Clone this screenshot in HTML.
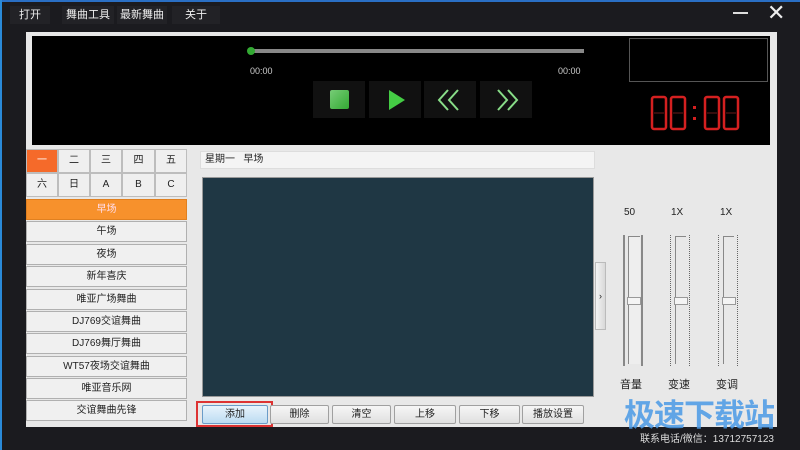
<!DOCTYPE html><html><head><meta charset="utf-8"><style>
*{margin:0;padding:0;box-sizing:border-box}
body{width:800px;height:450px;overflow:hidden;background:#1b1b1f;position:relative;font-family:"Liberation Sans","Noto Sans CJK SC",sans-serif;font-size:11px;color:#222}
.a{position:absolute}
.menu{color:#eee;font-size:11px;top:6px;height:18px;line-height:18px;text-align:center;background:#222226}
.btn{position:absolute;background:linear-gradient(#f6f6f6,#e0e0e0);border:1px solid #a0a0a0;text-align:center;font-size:10px;line-height:17px;border-radius:2px}
.g{position:absolute;background:#efefef;border:1px solid #bdbdbd;text-align:center;line-height:22px;font-size:10px}
.li{position:absolute;left:26px;width:161px;height:21px;background:#f0f0f0;border:1px solid #b0b0b0;text-align:center;line-height:19px;font-size:10px}
.pb{position:absolute;top:81px;height:37px;width:52px;background:#111;}
.trk{position:absolute;top:235px;width:20px;height:131px}
</style></head><body>
<div class="a" style="left:0;top:0;width:800px;height:2px;background:#2a6fc4"></div>
<div class="a" style="left:0;top:0;width:2px;height:450px;background:#2a8ad8"></div>
<div class="a menu" style="left:10px;width:40px">打开</div>
<div class="a menu" style="left:62px;width:52px">舞曲工具</div>
<div class="a menu" style="left:117px;width:50px">最新舞曲</div>
<div class="a menu" style="left:172px;width:48px">关于</div>
<div class="a" style="left:733px;top:12px;width:15px;height:2px;background:#ddd"></div>
<div class="a" style="left:767px;top:0px;color:#eee;font-size:22px;line-height:26px">✕</div>
<div class="a" style="left:26px;top:32px;width:751px;height:395px;background:#e8e8e8"></div>
<div class="a" style="left:32px;top:36px;width:738px;height:109px;background:#000"></div>
<div class="a" style="left:250px;top:49px;width:334px;height:4px;background:#888"></div>
<div class="a" style="left:247px;top:47px;width:8px;height:8px;border-radius:50%;background:#3a3"></div>
<div class="a" style="left:250px;top:66px;color:#ccc;font-size:9px">00:00</div>
<div class="a" style="left:558px;top:66px;color:#ccc;font-size:9px">00:00</div>
<div class="pb" style="left:313px"><div class="a" style="left:17px;top:9px;width:19px;height:19px;border-radius:2px;background:linear-gradient(135deg,#7c7,#3a3)"></div></div>
<div class="pb" style="left:369px"><svg class="a" style="left:19px;top:8px" width="18" height="22"><path d="M1 1 L17 11 L1 21Z" fill="#4c4"/></svg></div>
<div class="pb" style="left:424px"><svg class="a" style="left:12px;top:8px" width="26" height="22"><path d="M12 1 L3 11 L12 21 M22 1 L13 11 L22 21" stroke="#8d8" stroke-width="2" fill="none"/></svg></div>
<div class="pb" style="left:480px"><svg class="a" style="left:14px;top:8px" width="26" height="22"><path d="M4 1 L13 11 L4 21 M14 1 L23 11 L14 21" stroke="#8d8" stroke-width="2" fill="none"/></svg></div>
<div class="a" style="left:629px;top:38px;width:139px;height:44px;border:1px solid #555"></div>
<svg class="a" style="left:648px;top:94px" width="94" height="40"><g stroke="#d42020" stroke-width="2.5" fill="none">
<rect x="4" y="3" width="14" height="32" rx="2"/><rect x="23" y="3" width="14" height="32" rx="2"/>
<rect x="57" y="3" width="14" height="32" rx="2"/><rect x="76" y="3" width="14" height="32" rx="2"/></g>
<g stroke="#551" stroke-width="1"><path d="M6 19h10M25 19h10M59 19h10M78 19h10" stroke="#6a1a1a"/></g>
<rect x="45" y="12" width="3" height="3" fill="#d42020"/><rect x="45" y="23" width="3" height="3" fill="#d42020"/></svg>
<div class="g" style="left:26px;top:149px;width:32px;height:24px;background:#f56a2a;color:#fff">一</div>
<div class="g" style="left:58px;top:149px;width:32px;height:24px">二</div>
<div class="g" style="left:90px;top:149px;width:32px;height:24px">三</div>
<div class="g" style="left:122px;top:149px;width:33px;height:24px">四</div>
<div class="g" style="left:155px;top:149px;width:32px;height:24px">五</div>
<div class="g" style="left:26px;top:173px;width:32px;height:24px">六</div>
<div class="g" style="left:58px;top:173px;width:32px;height:24px">日</div>
<div class="g" style="left:90px;top:173px;width:32px;height:24px">A</div>
<div class="g" style="left:122px;top:173px;width:33px;height:24px">B</div>
<div class="g" style="left:155px;top:173px;width:32px;height:24px">C</div>
<div class="li" style="top:199px;background:#f7912c;color:#fde;border-color:#e08020">早场</div>
<div class="li" style="top:221px">午场</div>
<div class="li" style="top:244px">夜场</div>
<div class="li" style="top:266px">新年喜庆</div>
<div class="li" style="top:289px">唯亚广场舞曲</div>
<div class="li" style="top:311px">DJ769交谊舞曲</div>
<div class="li" style="top:333px">DJ769舞厅舞曲</div>
<div class="li" style="top:356px">WT57夜场交谊舞曲</div>
<div class="li" style="top:378px">唯亚音乐网</div>
<div class="li" style="top:400px">交谊舞曲先锋</div>
<div class="a" style="left:200px;top:151px;width:395px;height:18px;background:#f4f4f4;border:1px solid #ddd;padding-left:4px;line-height:16px;font-size:10px">星期一 &nbsp; 早场</div>
<div class="a" style="left:202px;top:177px;width:392px;height:220px;background:#1f3744;border:1px solid #999"></div>
<div class="a" style="left:196px;top:401px;width:77px;height:26px;border:2px solid #d33"></div>
<div class="btn" style="left:202px;top:405px;width:66px;height:19px;background:linear-gradient(#e8f3fc,#bcdcf2);border-color:#6a9cc8">添加</div>
<div class="btn" style="left:270px;top:405px;width:59px;height:19px">删除</div>
<div class="btn" style="left:332px;top:405px;width:59px;height:19px">清空</div>
<div class="btn" style="left:394px;top:405px;width:62px;height:19px">上移</div>
<div class="btn" style="left:459px;top:405px;width:61px;height:19px">下移</div>
<div class="btn" style="left:522px;top:405px;width:62px;height:19px">播放设置</div>
<div class="a" style="left:595px;top:262px;width:11px;height:68px;background:linear-gradient(90deg,#f4f4f4,#d8d8d8);border:1px solid #bbb;font-size:9px;line-height:66px;text-align:center">›</div>
<div class="a" style="left:624px;top:207px;font-size:10px">50</div>
<div class="a" style="left:671px;top:207px;font-size:10px">1X</div>
<div class="a" style="left:720px;top:207px;font-size:10px">1X</div>
<div class="trk" style="left:623px;border-left:2px solid #888;border-right:2px solid #888"><div class="a" style="left:3px;top:1px;width:12px;height:128px;border:1px solid #888;border-right:none;border-bottom:none;background:#eee"></div><div class="a" style="left:2px;top:62px;width:14px;height:8px;background:#f4f4f4;border:1px solid #999"></div></div>
<div class="trk" style="left:670px;border-left:1px dotted #666;border-right:1px dotted #666"><div class="a" style="left:4px;top:1px;width:11px;height:128px;border:1px solid #888;border-right:none;border-bottom:none"></div><div class="a" style="left:3px;top:62px;width:14px;height:8px;background:#f4f4f4;border:1px solid #999"></div></div>
<div class="trk" style="left:718px;border-left:1px dotted #666;border-right:1px dotted #666"><div class="a" style="left:4px;top:1px;width:11px;height:128px;border:1px solid #888;border-right:none;border-bottom:none"></div><div class="a" style="left:3px;top:62px;width:14px;height:8px;background:#f4f4f4;border:1px solid #999"></div></div>
<div class="a" style="left:620px;top:376px;font-size:11px">音量</div>
<div class="a" style="left:668px;top:376px;font-size:11px">变速</div>
<div class="a" style="left:716px;top:376px;font-size:11px">变调</div>
<div class="a" style="left:624px;top:398px;color:#4a9ae6;font-size:31px;font-weight:bold;line-height:36px;letter-spacing:-1px;opacity:.85">极速下载站</div>
<div class="a" style="left:640px;top:430px;color:#ddd;font-size:10px">联系电话/微信：13712757123</div>
</body></html>
